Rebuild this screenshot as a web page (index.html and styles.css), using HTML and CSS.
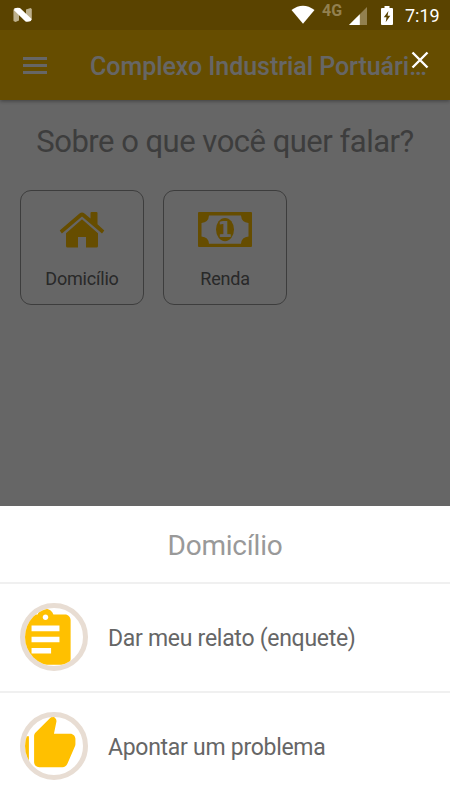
FILE: index.html
```
<!DOCTYPE html>
<html lang="pt-BR">

<head>
  <meta charset="UTF-8" />
  <meta name="viewport" content="width=device-width, initial-scale=1.0" />
  <title>Complexo Industrial Portuário</title>
  <link rel="stylesheet" href="styles.css">
</head>

<body>

  <!-- barra de status -->
  <div class="status-bar">
    <svg class="logo-n" viewBox="0 0 20 16">
      <path fill="#bdb08c" d="M.4 2.200L6 5v8.500L2.500 15l-2-1zM13 2.500L17.600 1l1.200 1v11L13 10z" />
      <path fill="#fff" d="M1.400 1.200Q4.500.2 7 1l11.600 11-.7 2q-2.700 1.200-5.400.6L1 3.300z" />
    </svg>
    <div class="status-icons">
      <svg class="wifi" viewBox="0 0 24 19"><path fill="#fff" d="M.5 5Q12-3.500 23.500 5L12 18.700z" /></svg>
      <span class="network">4G</span>
      <svg class="signal" viewBox="0 0 18 18">
        <path fill="#92804f" d="M0 18L18 0v18z" />
        <path fill="#fff" d="M0 18L10.800 7.200V18z" />
      </svg>
      <svg class="battery" viewBox="0 0 12 19">
        <path fill="#fff" d="M3.500 0h5v2H11q1 0 1 1v15q0 1-1 1H1q-1 0-1-1V3q0-1 1-1h2.500z" />
        <path fill="#5a4300" d="M7.400 5L2.800 11.300h2.700L4.700 16.200 9.300 9.700H6.600z" />
      </svg>
      <span class="clock">7:19</span>
    </div>
  </div>

  <div class="toolbar">
    <div class="menu"><span></span><span></span><span></span></div>
    <h1>Complexo Industrial Portuári…</h1>
  </div>

  <!-- temas -->
  <div class="content">
    <h2>Sobre o que você quer falar?</h2>
    <div class="cards">
      <div class="card">
        <svg class="icon-home" viewBox="0 0 46 37">
          <path d="M7 22.300L23 8.300l16 14V35q0 1.500-1.500 1.500H27v-10.500h-8v10.500H8.500Q7 36.500 7 35z" />
          <path d="M.7 19.500L20.500 2.400q2.500-2 5 0l6 5.200V2q0-1 1-1h5q1 0 1 1v11.300l6.800 6.200-2.300 2.900L23 5.600 2.900 22.400z" />
        </svg>
        <p>Domicílio</p>
      </div>
      <div class="card">
        <svg class="icon-money" viewBox="0 0 54 36">
          <path fill-rule="evenodd" d="M1 .5h52q1 0 1 1v33q0 1-1 1H1q-1 0-1-1v-33q0-1 1-1zM11 4Q10.500 11 3.500 11.500v13.500Q10.500 25.500 11 32.300h32q.5-6.800 7.500-7.300V11.500Q43.500 11 43 4z" />
          <ellipse cx="27" cy="18.100" rx="9" ry="11.700" />
          <text x="27" y="25.500" text-anchor="middle">1</text>
        </svg>
        <p>Renda</p>
      </div>
    </div>
  </div>

  <div class="backdrop"></div>
  <svg class="close" viewBox="0 0 18 18"><path d="M1.500 1.500l15 15M16.500 1.500l-15 15" /></svg>

  <!-- menu inferior -->
  <div class="sheet">
    <div class="sheet-title">Domicílio</div>
    <div class="sheet-item">
      <div class="avatar">
        <svg class="icon-report" viewBox="0 0 24 24">
          <path d="M19 3h-4.180C14.400 1.840 13.300 1 12 1c-1.300 0-2.400.84-2.820 2H5c-1.100 0-2 .9-2 2v14c0 1.100.9 2 2 2h14c1.100 0 2-.9 2-2V5c0-1.100-.9-2-2-2zm-7 0c.55 0 1 .45 1 1s-.45 1-1 1-1-.45-1-1 .45-1 1-1zm2 14H7v-2h7v2zm3-4H7v-2h10v2zm0-4H7V7h10v2z" />
        </svg>
      </div>
      <span>Dar meu relato (enquete)</span>
    </div>
    <div class="sheet-item">
      <div class="avatar">
        <svg class="icon-thumb" viewBox="0 0 24 24">
          <path d="M1 21h4V9H1v12zm22-11c0-1.100-.9-2-2-2h-6.310l.95-4.570.03-.32c0-.41-.17-.79-.44-1.060L14.170 1 7.590 7.590C7.220 7.950 7 8.450 7 9v10c0 1.100.9 2 2 2h9c.83 0 1.540-.5 1.840-1.220l3.020-7.050c.09-.23.14-.47.14-.73v-2z" />
        </svg>
      </div>
      <span>Apontar um problema</span>
    </div>
  </div>

</body>

</html>
```
FILE: styles.css
```
* {
  box-sizing: border-box;
}
body {
  margin: 0;
  height: 800px;
  overflow: hidden;
  position: relative;
  font-family: Roboto, sans-serif;
  background-color: #fff;
}
h1, h2, p {
  margin: 0;
  font-weight: 400;
}
svg {
  display: block;
  flex: none;
}
.status-bar {
  position: relative;
  z-index: 3;
  display: flex;
  justify-content: space-between;
  height: 30px;
  padding: 0 10px 0 13px;
  background-color: #5a4300;
  color: #fff;
}
.logo-n {
  width: 20px;
  height: 16px;
  margin-top: 7px;
}
.status-icons {
  display: flex;
  align-items: flex-start;
}
.wifi {
  width: 24px;
  height: 19px;
  margin-top: 5px;
}
.network {
  width: 22px;
  margin: 3px 0 0 7px;
  font-size: 16px;
  line-height: 16px;
  font-weight: 700;
  color: #92804f;
}
.signal {
  width: 18px;
  height: 18px;
  margin: 7px 0 0 5px;
}
.battery {
  width: 12px;
  height: 19px;
  margin: 6px 0 0 14px;
}
.clock {
  width: 35px;
  margin: 5px 0 0 12px;
  font-size: 18px;
  line-height: 22px;
}
.toolbar {
  position: relative;
  display: flex;
  align-items: center;
  height: 70px;
  padding-left: 23px;
  background-color: #ffc000;
  box-shadow: 0 1px 4px rgba(0,0,0,0.4);
}
.menu {
  display: flex;
  flex-direction: column;
  gap: 4px;
  width: 24px;
  margin-right: 43px;
}
.menu span {
  height: 3px;
  background-color: #fff;
}
.toolbar h1 {
  padding-top: 2px;
  font-size: 25px;
  font-weight: 500;
  letter-spacing: -0.05px;
  white-space: nowrap;
  color: #fff;
}
.content {
  padding: 22px 20px 0;
}
.content h2 {
  font-size: 31px;
  line-height: 40px;
  letter-spacing: -0.5px;
  text-align: center;
  white-space: nowrap;
  color: #999;
}
.cards {
  display: flex;
  gap: 20px;
  margin-top: 28px;
}
.card {
  display: flex;
  flex-direction: column;
  align-items: center;
  width: 124px;
  height: 115px;
  padding-top: 20px;
  border: 1px solid #999;
  border-radius: 11px;
}
.card + .card {
  margin-left: -1px;
}
.card svg {
  height: 37px;
  fill: #ffc000;
}
.icon-home {
  width: 46px;
}
.icon-money {
  width: 54px;
}
.icon-money text {
  font-family: "DejaVu Sans", sans-serif;
  font-size: 21px;
  font-weight: 700;
  fill: #fff;
}
.card p {
  margin-top: 20px;
  font-size: 18px;
  line-height: 22px;
  letter-spacing: -0.2px;
  color: #666;
}
.backdrop {
  position: absolute;
  top: 30px;
  right: 0;
  bottom: 0;
  left: 0;
  z-index: 1;
  background-color: rgba(0,0,0,0.6);
}
.close {
  position: absolute;
  top: 51px;
  right: 21px;
  z-index: 2;
  width: 18px;
  height: 18px;
  fill: none;
  stroke: #fff;
  stroke-width: 2.4;
}
.sheet {
  position: absolute;
  right: 0;
  bottom: 0;
  left: 0;
  z-index: 2;
  height: 294px;
  background-color: #fff;
}
.sheet-title {
  height: 76px;
  padding-top: 2px;
  font-size: 28px;
  line-height: 76px;
  letter-spacing: -0.2px;
  text-align: center;
  color: #999;
}
.sheet-item {
  display: flex;
  align-items: center;
  height: 109px;
  padding-left: 20px;
  border-top: 2px solid #f0f0f0;
  font-size: 23px;
  letter-spacing: -0.28px;
  color: #666;
}
.sheet-item span {
  margin-left: 20px;
  padding-top: 1px;
}
.avatar {
  width: 68px;
  height: 68px;
  margin-top: -1px;
  border: 5px solid #e8ddd3;
  border-radius: 50%;
  overflow: hidden;
}
.avatar svg {
  fill: #ffc000;
}
.icon-report {
  width: 67px;
  height: 67px;
  margin: -2px 0 0 -13px;
}
.icon-thumb {
  width: 62px;
  height: 62px;
  margin: -4px 0 0 -9px;
}
```
